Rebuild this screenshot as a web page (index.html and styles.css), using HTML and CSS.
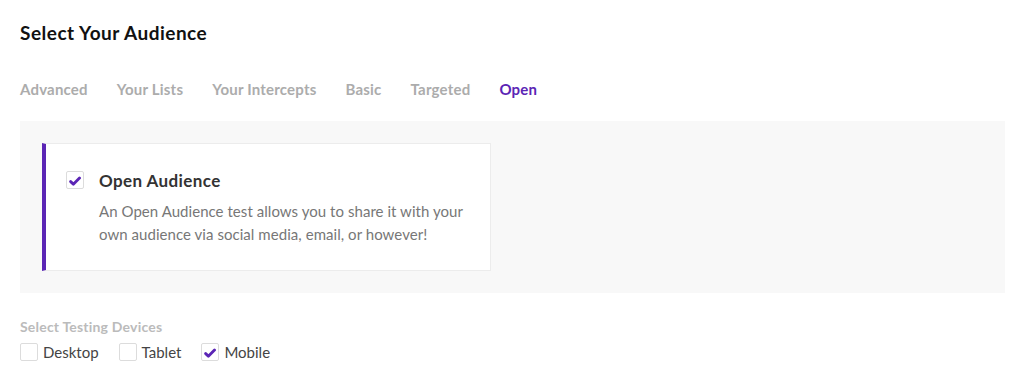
FILE: index.html
```html
<!DOCTYPE html>
<html lang="en">
<head>
    <meta charset="UTF-8">
    <meta name="viewport" content="width=device-width, initial-scale=1.0">
    <title>Select Your Audience</title>
    <link rel="stylesheet" href="styles.css">
</head>
<body>
    <div class="page">
        <h1 class="page-title">Select Your Audience</h1>

        <nav class="tabs">
            <span class="tab">Advanced</span>
            <span class="tab">Your Lists</span>
            <span class="tab">Your Intercepts</span>
            <span class="tab">Basic</span>
            <span class="tab">Targeted</span>
            <span class="tab active">Open</span>
        </nav>

        <div class="panel">
            <div class="audience-card">
                <span class="checkbox checked">
                    <svg class="check-icon" viewBox="0 0 16 16" xmlns="http://www.w3.org/2000/svg">
                        <path d="M2.2 8.8 L5.8 12.2 L14 4" fill="none" stroke="currentColor" stroke-width="3.8" stroke-linecap="round" stroke-linejoin="round"/>
                    </svg>
                </span>
                <div class="audience-body">
                    <div class="audience-title">Open Audience</div>
                    <p class="audience-desc">An Open Audience test allows you to share it with your own audience via social media, email, or however!</p>
                </div>
            </div>
        </div>

        <div class="devices">
            <div class="devices-label">Select Testing Devices</div>
            <div class="device-list">
                <label class="device">
                    <span class="checkbox"></span>
                    Desktop
                </label>
                <label class="device">
                    <span class="checkbox"></span>
                    Tablet
                </label>
                <label class="device">
                    <span class="checkbox checked">
                        <svg class="check-icon" viewBox="0 0 16 16" xmlns="http://www.w3.org/2000/svg">
                            <path d="M2.2 8.8 L5.8 12.2 L14 4" fill="none" stroke="currentColor" stroke-width="3.8" stroke-linecap="round" stroke-linejoin="round"/>
                        </svg>
                    </span>
                    Mobile
                </label>
            </div>
        </div>
    </div>
</body>
</html>
```

FILE: styles.css
```css
body {
    margin: 0;
    font-family: Lato, 'Open Sans', Arial, sans-serif;
    background-color: #fff;
    color: #444;
}
.page {
    padding: 21px 19px 0 20px;
}
.page-title {
    margin: 0;
    font-size: 19px;
    line-height: 23px;
    font-weight: 700;
    color: #111;
    letter-spacing: 0.5px;
}
.tabs {
    display: flex;
    gap: 29px;
    margin-top: 36px;
}
.tab {
    font-size: 15px;
    line-height: 18px;
    font-weight: 700;
    color: #acacac;
    letter-spacing: 0.2px;
}
.tab.active {
    color: #5b25b5;
}
.panel {
    margin-top: 23px;
    padding: 22px;
    background-color: #f8f8f8;
}
.audience-card {
    display: flex;
    align-items: flex-start;
    gap: 15px;
    width: 449px;
    box-sizing: border-box;
    height: 128px;
    padding: 27px 20px 0 20px;
    background-color: #fff;
    border: 1px solid #ececec;
    border-left: 4px solid #5b25b5;
}
.checkbox {
    display: inline-flex;
    align-items: center;
    justify-content: center;
    flex-shrink: 0;
    width: 18px;
    height: 18px;
    box-sizing: border-box;
    border: 1px solid #dcdcdc;
    border-radius: 2px;
    background-color: #fff;
    color: #5b25b5;
}
.check-icon {
    width: 12px;
    height: 12px;
    margin: 1px 1px 0 0;
}
.audience-title {
    font-size: 17px;
    line-height: 20px;
    font-weight: 700;
    color: #333;
    letter-spacing: 0.4px;
}
.audience-desc {
    margin: 9px 0 0;
    font-size: 15px;
    line-height: 23px;
    color: #777;
    letter-spacing: 0.05px;
}
.devices {
    margin-top: 26px;
}
.devices-label {
    font-size: 14px;
    line-height: 16px;
    font-weight: 700;
    color: #bbb;
    letter-spacing: 0.2px;
}
.device-list {
    display: flex;
    gap: 20px;
    margin-top: 8px;
}
.device {
    display: flex;
    align-items: center;
    gap: 5px;
    font-size: 15px;
    line-height: 18px;
    color: #444;
}
```
